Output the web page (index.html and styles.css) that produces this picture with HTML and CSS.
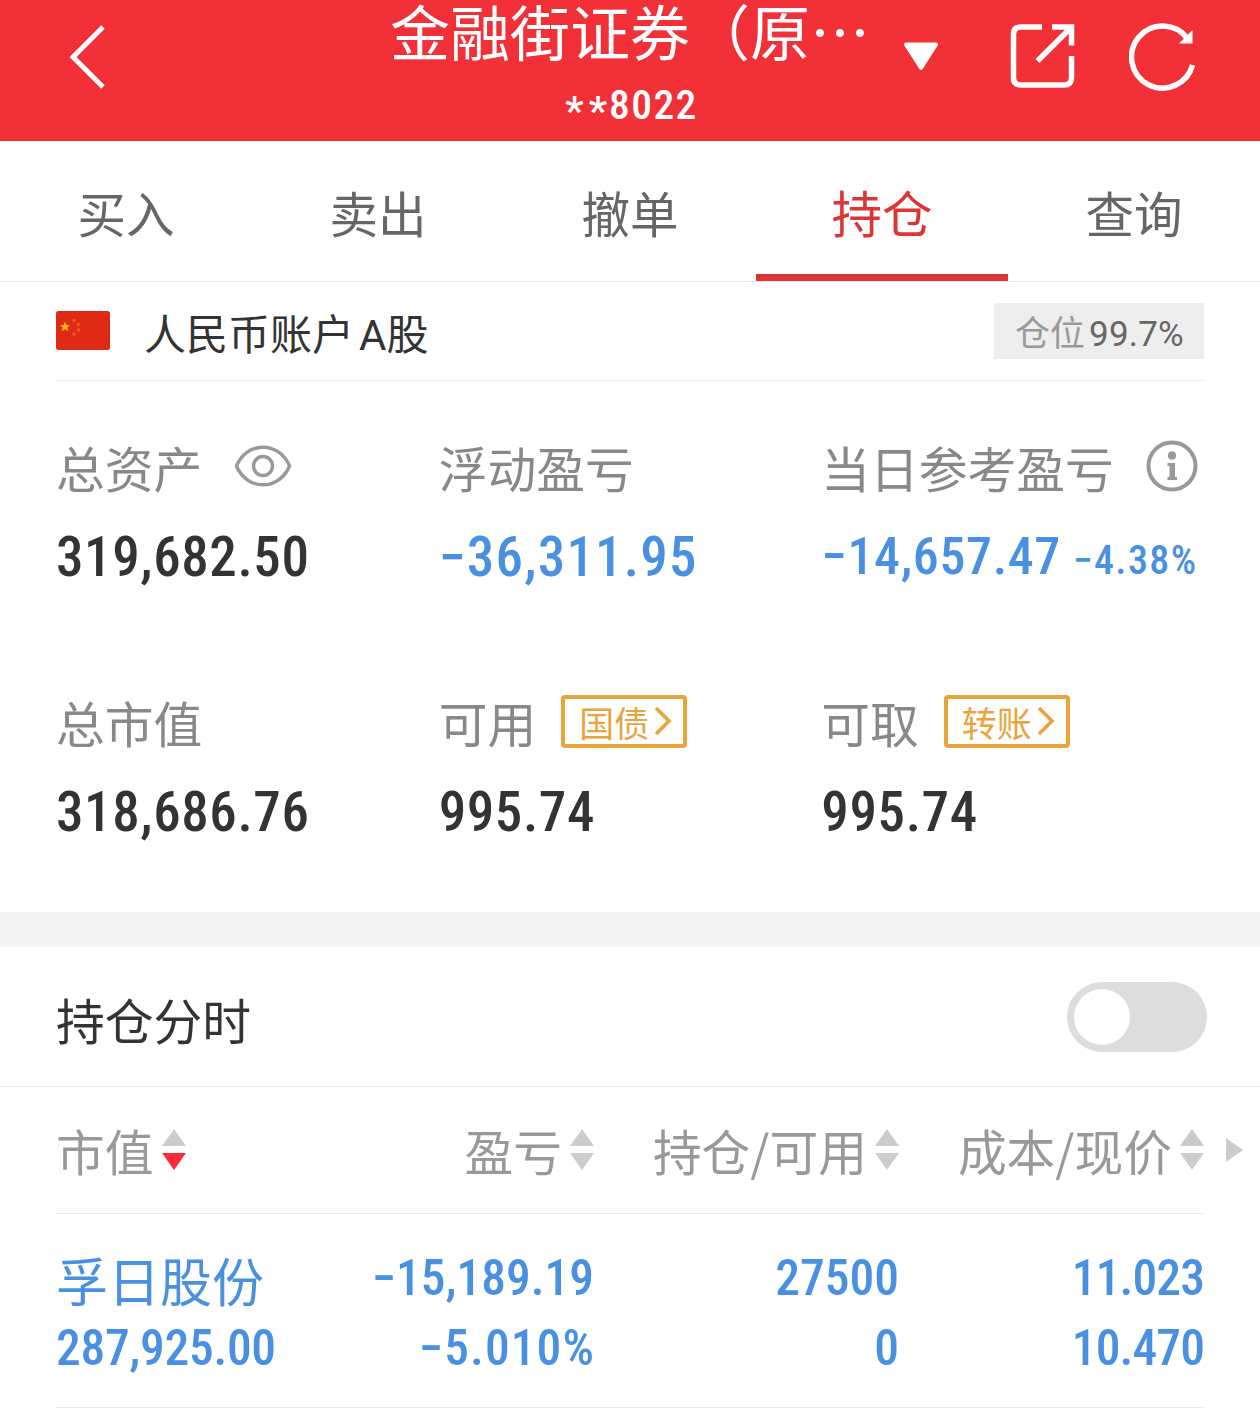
FILE: index.html
```html
<!DOCTYPE html>
<html lang="zh-CN">
<head>
    <meta charset="UTF-8">
    <meta name="viewport" content="width=device-width, initial-scale=1.0">
    <title>持仓</title>
    <link rel="stylesheet" href="styles.css">
</head>
<body>
<header class="header">
    <div class="header-left">
        <svg class="back" width="36" height="64" viewBox="0 0 36 64"><path d="M33 2L3 32L33 62" fill="none" stroke="#fff" stroke-width="5"/></svg>
    </div>
    <div class="header-title">
        <div class="broker">金融街证券（原…</div>
        <div class="account-no"><span class="stars">**</span>8022</div>
    </div>
    <div class="header-right">
        <svg class="dropdown" width="36" height="30" viewBox="0 0 36 30"><path d="M3 2.500H33L18 26Z" fill="#fff" stroke="#fff" stroke-width="4" stroke-linejoin="round"/></svg>
        <svg class="share" width="66" height="66" viewBox="0 0 66 66" fill="none" stroke="#fff" stroke-width="5.500">
            <path d="M32 4H11Q3.500 4 3.500 11V55Q3.500 62 11 62H54Q61.500 62 61.500 55V33"/>
            <path d="M42 4H61.500V22.500M61 4.500L27.500 38"/>
        </svg>
        <svg class="refresh" width="68" height="68" viewBox="0 0 68 68">
            <path d="M63.500 42A31 31 0 1 1 58 15" fill="none" stroke="#fff" stroke-width="5.500"/>
            <path d="M63.500 7V20.500H50Z" fill="#fff"/>
        </svg>
    </div>
</header>

<nav class="tabs">
    <a class="tab">买入</a>
    <a class="tab">卖出</a>
    <a class="tab">撤单</a>
    <a class="tab active">持仓</a>
    <a class="tab">查询</a>
</nav>

<section class="account">
    <svg class="flag" width="54" height="39" viewBox="0 0 54 39">
        <rect width="54" height="39" rx="2.500" fill="#df2a14"/>
        <path d="M9 10.500L10.500 14L14 14.300L11.400 16.600L12.200 20.200L9 18.300L5.800 20.200L6.600 16.600L4 14.300L7.500 14Z" fill="#fcb315"/>
        <g fill="#ee5a1c">
            <circle cx="18" cy="9.500" r="1.700"/>
            <circle cx="22.500" cy="13.500" r="1.700"/>
            <circle cx="22.500" cy="19" r="1.700"/>
            <circle cx="18" cy="23" r="1.700"/>
        </g>
    </svg>
    <div class="account-name">人民币账户<span class="market">A股</span></div>
    <div class="position">仓位<span class="position-rate">99.7%</span></div>
</section>

<section class="summary">
    <div class="item">
        <div class="label">总资产
            <svg class="eye" width="58" height="42" viewBox="0 0 58 42" fill="none" stroke="#999" stroke-width="3.400">
                <path d="M2.500 21C7 10 17 2.200 29 2.200S51 10 55.500 21C51 32 41 39.800 29 39.800S7 32 2.500 21Z"/>
                <circle cx="29" cy="21" r="9.500"/>
            </svg>
        </div>
        <div class="value">319,682.50</div>
    </div>
    <div class="item">
        <div class="label">浮动盈亏</div>
        <div class="value down">−36,311.95</div>
    </div>
    <div class="item">
        <div class="label">当日参考盈亏
            <svg class="info" width="52" height="52" viewBox="0 0 52 52">
                <circle cx="26" cy="26" r="23.500" fill="none" stroke="#999" stroke-width="4"/>
                <circle cx="26" cy="15.500" r="4.200" fill="#999"/>
                <path d="M21.500 23H29V37H31V40H21.500V37H23.500V26H21.500Z" fill="#999"/>
            </svg>
        </div>
        <div class="value down day">−14,657.47<span class="rate">−4.38%</span></div>
    </div>
    <div class="item">
        <div class="label">总市值</div>
        <div class="value">318,686.76</div>
    </div>
    <div class="item">
        <div class="label">可用
            <span class="link">国债<svg width="18" height="30" viewBox="0 0 18 30"><path d="M2 2L15 15L2 28" fill="none" stroke="#e9a43b" stroke-width="3.600"/></svg></span>
        </div>
        <div class="value">995.74</div>
    </div>
    <div class="item">
        <div class="label">可取
            <span class="link">转账<svg width="18" height="30" viewBox="0 0 18 30"><path d="M2 2L15 15L2 28" fill="none" stroke="#e9a43b" stroke-width="3.600"/></svg></span>
        </div>
        <div class="value">995.74</div>
    </div>
</section>

<section class="timeline">
    <span class="timeline-title">持仓分时</span>
    <span class="switch"><span class="knob"></span></span>
</section>

<section class="holdings">
    <div class="row head">
        <div class="cell">市值<svg class="sort desc" width="24" height="42" viewBox="0 0 24 42"><path class="up" d="M12 0L24 17H0Z"/><path class="dn" d="M0 24H24L12 41Z"/></svg></div>
        <div class="cell">盈亏<svg class="sort" width="24" height="42" viewBox="0 0 24 42"><path class="up" d="M12 0L24 17H0Z"/><path class="dn" d="M0 24H24L12 41Z"/></svg></div>
        <div class="cell">持仓/可用<svg class="sort" width="24" height="42" viewBox="0 0 24 42"><path class="up" d="M12 0L24 17H0Z"/><path class="dn" d="M0 24H24L12 41Z"/></svg></div>
        <div class="cell">成本/现价<svg class="sort" width="24" height="42" viewBox="0 0 24 42"><path class="up" d="M12 0L24 17H0Z"/><path class="dn" d="M0 24H24L12 41Z"/></svg></div>
        <svg class="more" width="17" height="24" viewBox="0 0 17 24"><path d="M0 0L17 12L0 24Z"/></svg>
    </div>
    <div class="row stock">
        <div class="cell"><div class="name">孚日股份</div><div class="num market-value">287,925.00</div></div>
        <div class="cell"><div class="num">−15,189.19</div><div class="num percent">−5.010%</div></div>
        <div class="cell"><div class="num">27500</div><div class="num">0</div></div>
        <div class="cell"><div class="num price">11.023</div><div class="num price">10.470</div></div>
    </div>
</section>
</body>
</html>
```
FILE: styles.css
```css
* {
    box-sizing: border-box;
}

body {
    margin: 0;
    background-color: #fff;
    color: #333;
    font-family: "Noto Sans CJK SC", sans-serif;
    font-weight: 400;
    white-space: nowrap;
}

svg {
    display: block;
    flex-shrink: 0;
}

/* header */
.header {
    display: grid;
    grid-template-columns: 390px 480px 390px;
    height: 141px;
    background-color: #f23037;
    color: #fff;
}

.header-left {
    padding: 25px 0 0 70px;
}

.header-title {
    display: flex;
    flex-direction: column;
    align-items: center;
}

.broker {
    height: 74px;
    font-size: 60px;
    line-height: 60px;
}

.account-no {
    font-family: Roboto, sans-serif;
    font-size: 41.5px;
    font-weight: 500;
    font-stretch: condensed;
    line-height: 61px;
    letter-spacing: 1.4px;
}

.stars {
    display: inline-block;
    letter-spacing: 5px;
    transform: translate(3px, 6px);
}

.header-right {
    display: flex;
    align-items: flex-start;
    padding-left: 33px;
}

.dropdown {
    margin-top: 42px;
}

.share {
    margin: 23px 0 0 71px;
}

.refresh {
    margin: 23px 0 0 53px;
}

/* tabs */
.tabs {
    display: flex;
    height: 141px;
    border-bottom: 1px solid #ececec;
}

.tab {
    flex: 1;
    height: 140px;
    color: #666;
    font-size: 48.5px;
    line-height: 143px;
    text-align: center;
}

.tab.active {
    border-bottom: 7px solid #dd3434;
    color: #dd3434;
    font-size: 50.5px;
    line-height: 141px;
}

/* account */
.account {
    display: flex;
    align-items: center;
    height: 99px;
    margin: 0 56px;
    border-bottom: 1px solid #ececec;
}

.flag {
    margin-bottom: 2px;
}

.account-name {
    margin-left: 34px;
    padding-top: 5px;
    font-size: 42px;
    line-height: 93px;
}

.market {
    margin-left: 5px;
    font-family: Roboto, "Noto Sans CJK SC", sans-serif;
}

.position {
    display: flex;
    align-items: center;
    width: 210px;
    height: 56px;
    margin-left: auto;
    padding-left: 21px;
    background-color: #eee;
    color: #999;
    font-size: 35px;
    line-height: 58px;
}

.position-rate {
    margin: 7px 0 0 4px;
    color: #666;
    font-family: Roboto, sans-serif;
    letter-spacing: 0.2px;
}

/* summary */
.summary {
    display: grid;
    grid-template-columns: repeat(3, minmax(0, 1fr));
    grid-auto-rows: 255px;
    height: 531px;
    padding: 49px 56px 0;
}

.label {
    display: flex;
    align-items: center;
    height: 72px;
    color: #888;
    font-size: 48.75px;
    line-height: 75px;
}

.eye {
    margin-left: 32px;
}

.info {
    margin-left: 32px;
}

.value {
    margin-top: 20px;
    font-family: Roboto, sans-serif;
    font-size: 55px;
    font-weight: 500;
    font-stretch: condensed;
    line-height: 70px;
    letter-spacing: 0.6px;
}

.down {
    color: #4a90e2;
    letter-spacing: 1.2px;
}

.day {
    font-size: 52px;
    letter-spacing: 0.6px;
}

.rate {
    margin-left: 12px;
    font-size: 40px;
    letter-spacing: 1.4px;
}

.link {
    display: flex;
    align-items: center;
    width: 126px;
    height: 53px;
    margin-left: 25px;
    padding-left: 14px;
    border: 4px solid #e9a43b;
    border-radius: 4px;
    color: #e9a43b;
    font-size: 35px;
    line-height: 45px;
}

.link svg {
    margin-left: 5px;
}

/* intraday switch */
.timeline {
    display: flex;
    align-items: center;
    justify-content: space-between;
    height: 175px;
    padding: 0 53px 0 56px;
    border-top: 35px solid #f4f4f4;
    border-bottom: 1px solid #ececec;
}

.timeline-title {
    padding-top: 4px;
    font-size: 48.75px;
    line-height: 135px;
}

.switch {
    width: 140px;
    height: 70px;
    padding: 7px;
    border-radius: 35px;
    background-color: #ddd;
}

.knob {
    display: block;
    width: 56px;
    height: 56px;
    border-radius: 50%;
    background-color: #fff;
}

/* holdings */
.row {
    display: grid;
    position: relative;
    grid-template-columns: 233px 305px 305px 305px;
    margin: 0 56px;
    border-bottom: 1px solid #ececec;
}

.head {
    height: 127px;
    color: #999;
    font-size: 48.75px;
    line-height: 126px;
}

.head .cell {
    display: flex;
    align-items: center;
    justify-content: flex-end;
}

.head .cell:first-child {
    justify-content: flex-start;
}

.sort {
    margin-left: 8px;
    fill: #ccc;
}

.sort.desc .dn {
    fill: #fc2a3a;
}

/* scroll hint in the page margin */
.more {
    position: absolute;
    top: 51px;
    right: -39px;
    fill: #ccc;
}

.stock {
    height: 194px;
    padding-top: 29px;
    color: #4a90e2;
}

.stock .cell {
    text-align: right;
}

.stock .cell:first-child {
    text-align: left;
}

.name {
    height: 70px;
    font-size: 52px;
    line-height: 73px;
}

.num {
    font-family: Roboto, sans-serif;
    font-size: 49.5px;
    font-weight: 500;
    font-stretch: condensed;
    line-height: 70px;
}

.market-value {
    letter-spacing: -0.3px;
}

.percent {
    margin-right: -1px;
    letter-spacing: 1.1px;
}

.price {
    letter-spacing: -0.9px;
}
```
